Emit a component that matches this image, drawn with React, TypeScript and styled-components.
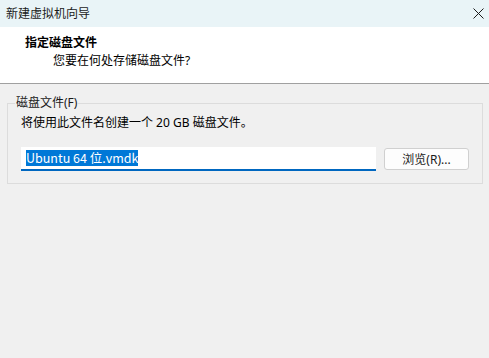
import React from "react";
import styled, { createGlobalStyle } from "styled-components";

const Global = createGlobalStyle`
  html, body { margin: 0; padding: 0; }
  body {
    width: 489px; height: 358px; overflow: hidden;
    background: #f0f0f0;
    font-family: "Noto Sans", "Noto Sans CJK SC", sans-serif;
    font-size: 12px;
    color: #000;
  }
  ::selection { background: #0078d7; color: #fff; }
`;

const Window = styled.div`
  width: 489px;
  height: 358px;
  display: flex;
  flex-direction: column;
  background: #f0f0f0;
`;

const TitleBar = styled.div`
  height: 27px;
  flex: none;
  background: #e9f4f7;
  display: flex;
  align-items: center;
  justify-content: space-between;
  padding: 0 5px 0 6px;
  box-sizing: border-box;
`;

const TitleText = styled.span`
  font-size: 12px;
  line-height: 14px;
  color: #1a1a1a;
`;

const CloseBtn = styled.div`
  width: 12px;
  height: 12px;
  display: flex;
  align-items: center;
  justify-content: center;
  margin-bottom: 1px;
`;

const Header = styled.div`
  height: 57px;
  flex: none;
  background: #fff;
  border-bottom: 1px solid #a0a0a0;
  box-sizing: border-box;
  padding: 8px 0 0 25px;
  display: flex;
  flex-direction: column;
`;

const HeaderTitle = styled.div`
  font-weight: bold;
  font-size: 12px;
  line-height: 16px;
  height: 16px;
`;

const HeaderSub = styled.div`
  padding-left: 28px;
  font-size: 12px;
  line-height: 16px;
  margin-top: 2px;
`;

const Body = styled.div`
  padding: 12px 6px 0 7px;
`;

const Group = styled.fieldset`
  margin: 0;
  border: 1px solid #dcdcdc;
  padding: 4px 13px 11px 13px;
  min-width: 0;
  height: 88px;
  box-sizing: border-box;
`;

const Legend = styled.legend`
  padding: 0 1px;
  margin-left: -6px;
  font-size: 12px;
  line-height: 14px;
  color: #1a1a1a;
`;

const Info = styled.div`
  font-size: 12px;
  line-height: 14px;
  margin-top: 2px;
`;

const Row = styled.div`
  display: flex;
  align-items: flex-start;
  margin-top: 17px;
  gap: 8px;
`;

const InputBox = styled.div`
  width: 355px;
  height: 24px;
  background: #fff;
  border-bottom: 2px solid #0067c0;
  box-sizing: border-box;
  display: flex;
  align-items: center;
  padding-left: 5px;
`;

const Selected = styled.span`
  background: #0078d7;
  color: #fff;
  font-family: "Noto Sans CJK SC", sans-serif;
  font-size: 12.5px;
  line-height: 16px;
  height: 16px;
  display: inline-flex;
  align-items: center;
`;

const Button = styled.div`
  margin-top: 1px;
  width: 85px;
  height: 22px;
  box-sizing: border-box;
  border: 1px solid #d0d0d0;
  border-radius: 3px;
  background: #fdfdfd;
  display: flex;
  align-items: center;
  justify-content: center;
  font-size: 12px;
  color: #1a1a1a;
`;

export default function App() {
  return (
    <>
      <Global />
      <Window>
        <TitleBar>
          <TitleText>新建虚拟机向导</TitleText>
          <CloseBtn>
            <svg width="11" height="11" viewBox="0 0 11 11">
              <path d="M0.5 0.5 L10.5 10.5 M10.5 0.5 L0.5 10.5" stroke="#1a1a1a" strokeWidth="1" />
            </svg>
          </CloseBtn>
        </TitleBar>
        <Header>
          <HeaderTitle>指定磁盘文件</HeaderTitle>
          <HeaderSub>您要在何处存储磁盘文件?</HeaderSub>
        </Header>
        <Body>
          <Group>
            <Legend>磁盘文件(F)</Legend>
            <Info>将使用此文件名创建一个 20 GB 磁盘文件。</Info>
            <Row>
              <InputBox>
                <Selected>Ubuntu 64 位.vmdk</Selected>
              </InputBox>
              <Button>浏览(R)...</Button>
            </Row>
          </Group>
        </Body>
      </Window>
    </>
  );
}
